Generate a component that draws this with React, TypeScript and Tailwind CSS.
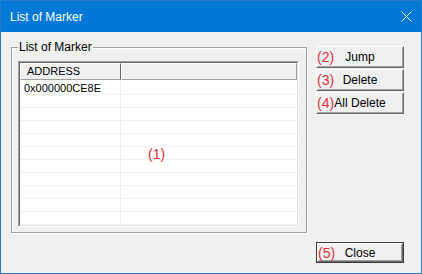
import React from "react";

function Btn({ label, num, isDefault, h }: { label: string; num: string; isDefault?: boolean; h: string }) {
  return (
    <div className={`relative ${h} ${isDefault ? "border border-[#3c3c3c]" : ""}`}>
      <div className="h-full border border-t-white border-l-white border-r-[#696969] border-b-[#696969]">
        <div className="h-full border border-t-[#f0f0f0] border-l-[#f0f0f0] border-r-[#a0a0a0] border-b-[#a0a0a0] bg-[#f0f0f0] flex items-center justify-center text-[12px] text-black leading-none">
          {label}
        </div>
      </div>
      <span className="absolute left-[1px] top-0 h-full flex items-center text-[14px] leading-none text-[#e0303a]">{num}</span>
    </div>
  );
}

export default function App() {
  const rows = Array.from({ length: 10 });
  return (
    <div
      className="w-[422px] h-[274px] border border-[#2a78c8] flex flex-col bg-[#f0f0f0] overflow-hidden"
      style={{ fontFamily: '"Liberation Sans", Arial, sans-serif' }}
    >
      <div className="h-[31px] shrink-0 bg-[#0078d7] flex items-center justify-between pl-[9px] pr-[9px] text-white text-[12px]">
        <span>List of Marker</span>
        <svg width="11" height="11" viewBox="0 0 11 11" className="block">
          <path d="M0.5 0.5 L10.5 10.5 M10.5 0.5 L0.5 10.5" stroke="white" strokeWidth="1" fill="none" />
        </svg>
      </div>
      <div className="flex-1 flex pl-[10px]">
        <div className="mt-[15px] relative w-[296px] h-[186px] border border-[#a0a0a0] shadow-[1px_1px_0_#ffffff,inset_1px_1px_0_#ffffff] pt-[13px] pl-[6px]">
          <span className="absolute -top-[8px] left-[6px] px-[1px] bg-[#f0f0f0] text-[12px] leading-[14px] text-black">List of Marker</span>
          <div className="w-[281px] h-[166px] border border-t-[#a0a0a0] border-l-[#a0a0a0] border-b-white border-r-white">
            <div className="relative h-full border border-t-[#696969] border-l-[#696969] border-b-[#e3e3e3] border-r-[#e3e3e3] bg-white overflow-hidden text-[11px] text-black">
              <div className="flex h-[17px]">
                <div className="w-[101px] h-full border border-t-white border-l-white border-r-[#696969] border-b-[#a0a0a0] bg-[#f0f0f0] pl-[6px] flex items-center leading-none">
                  ADDRESS
                </div>
                <div className="flex-1 h-full border border-t-white border-l-white border-r-[#a0a0a0] border-b-[#a0a0a0] bg-[#f0f0f0]" />
              </div>
              <div className="flex h-[15px] border-b border-[#f0f0f0]">
                <div className="w-[101px] h-full border-r border-[#f0f0f0] pl-[4px] flex items-center leading-none pt-[2px]">0x000000CE8E</div>
                <div className="flex-1" />
              </div>
              {rows.map((_, i) => (
                <div key={i} className="flex h-[13px] border-b border-[#f0f0f0]">
                  <div className="w-[101px] h-full border-r border-[#f0f0f0]" />
                  <div className="flex-1" />
                </div>
              ))}
              <span className="absolute left-[128px] top-[83px] text-[14px] leading-[16px] text-[#e0303a]">(1)</span>
            </div>
          </div>
        </div>
        <div className="ml-[9px] w-[88px] flex flex-col pt-[14px] pb-[10px]">
          <div className="flex flex-col gap-[1px]">
            <Btn label="Jump" num="(2)" h="h-[22px]" />
            <Btn label="Delete" num="(3)" h="h-[22px]" />
            <Btn label="All Delete" num="(4)" h="h-[22px]" />
          </div>
          <div className="mt-auto">
            <Btn label="Close" num="(5)" isDefault h="h-[21px]" />
          </div>
        </div>
      </div>
    </div>
  );
}
